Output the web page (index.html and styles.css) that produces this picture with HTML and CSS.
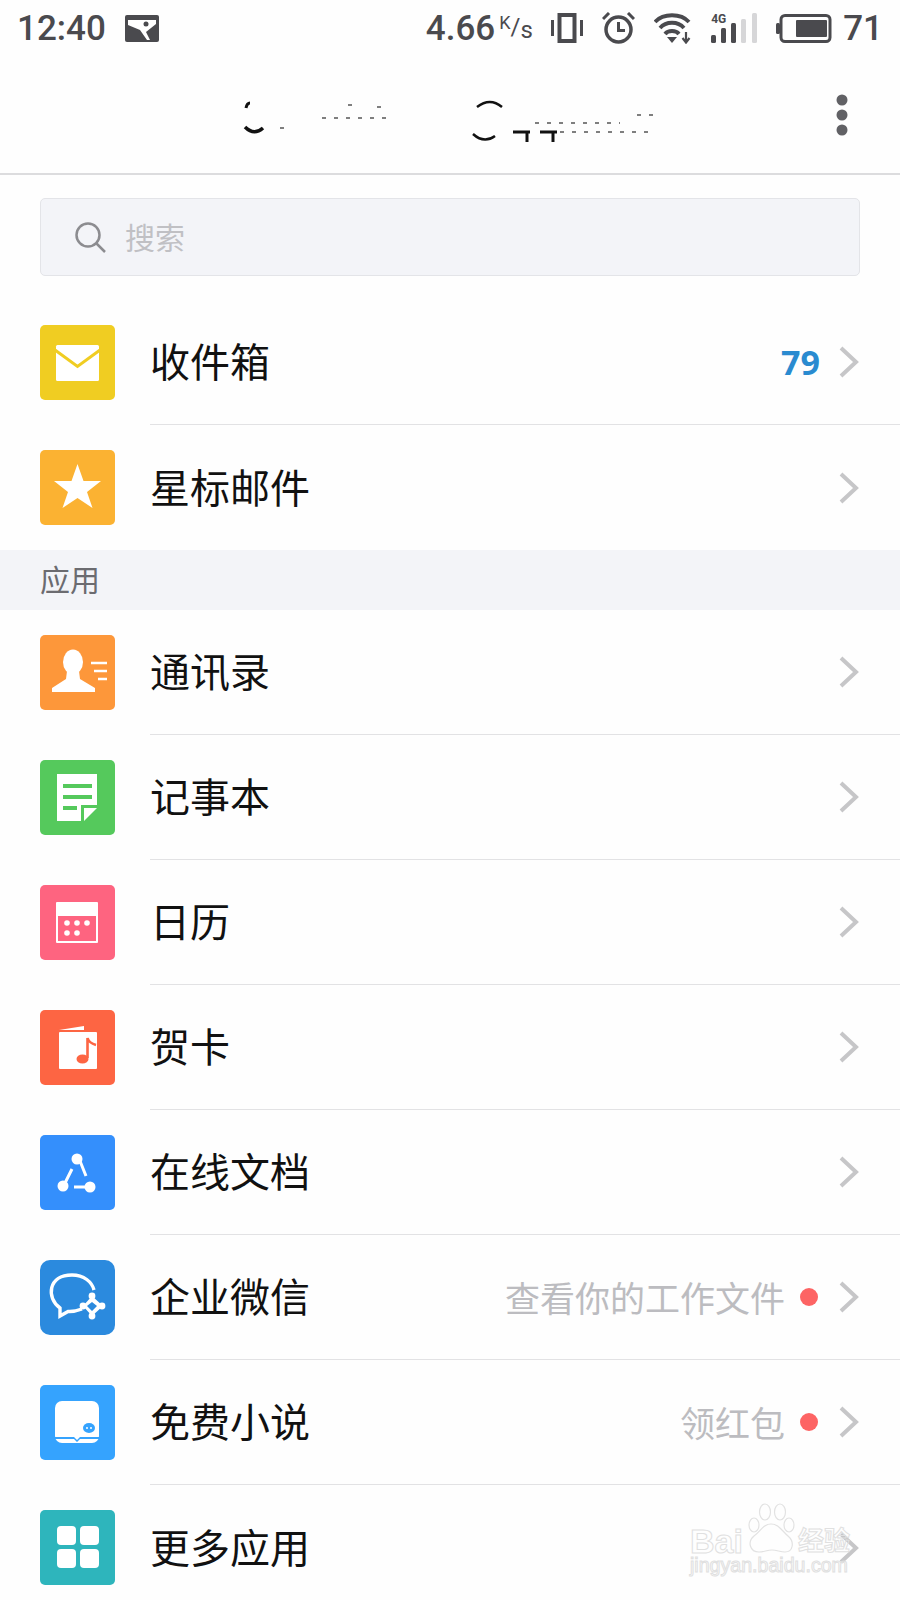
FILE: index.html
```html
<!DOCTYPE html>
<html lang="zh-CN">
  <head>
    <meta charset="UTF-8" />
    <title>邮箱</title>
    <link rel="stylesheet" href="styles.css">
  </head>
  <body>
    <div class="status-bar">
      <div class="status-left">
        <span class="clock">12:40</span>
        <svg width="34" height="27" viewBox="0 0 34 27">
          <rect width="34" height="27" rx="2" fill="#4a4a4e"/>
          <path d="M3 5 H31 V9 L21 17 L25 25 H22 L15 15 L3 10 Z" fill="#fff"/>
          <circle cx="21" cy="9" r="2.5" fill="#4a4a4e"/>
        </svg>
      </div>
      <div class="status-right">
        <span class="speed">4.66<span class="speed-unit"><span class="unit-k">K</span>/<span class="unit-s">s</span></span></span>
        <svg width="32" height="30" viewBox="0 0 32 30">
          <rect x="0" y="7" width="3" height="16" fill="#4a4a4e"/>
          <rect x="29" y="7" width="3" height="16" fill="#4a4a4e"/>
          <rect x="8.5" y="2" width="15" height="26" fill="none" stroke="#4a4a4e" stroke-width="4"/>
        </svg>
        <svg width="33" height="32" viewBox="0 0 33 32">
          <circle cx="16.5" cy="17.5" r="12.5" fill="none" stroke="#4a4a4e" stroke-width="3.5"/>
          <path d="M16.5 10 V18.5 H23" fill="none" stroke="#4a4a4e" stroke-width="3"/>
          <path d="M1 7 L7 1 M32 7 L26 1" stroke="#4a4a4e" stroke-width="3"/>
        </svg>
        <svg width="38" height="31" viewBox="0 0 38 31">
          <g fill="none" stroke="#4a4a4e" stroke-width="3.8">
            <path d="M1 9 C9 0 27 0 35 9"/>
            <path d="M6 15 C12 8 24 8 30 15"/>
            <path d="M11 21 C14 17 22 17 25 21"/>
          </g>
          <path d="M13 24 H23 L18 30 Z" fill="#4a4a4e"/>
          <path d="M32 19 V28 M28.5 25 L32 29.5 L35.5 25" fill="none" stroke="#4a4a4e" stroke-width="2.2"/>
        </svg>
        <div class="signal">
          <span class="signal-type">4G</span>
          <svg width="46" height="30" viewBox="0 0 46 30">
            <rect x="0" y="22" width="5" height="8" rx="1.5" fill="#4a4a4e"/>
            <rect x="10" y="15" width="5" height="15" rx="1.5" fill="#4a4a4e"/>
            <rect x="20" y="10" width="5" height="20" rx="1.5" fill="#4a4a4e"/>
            <rect x="30" y="6" width="5" height="24" rx="1.5" fill="#d6d6d8"/>
            <rect x="41" y="0" width="5" height="30" rx="1.5" fill="#d6d6d8"/>
          </svg>
        </div>
        <svg width="56" height="29" viewBox="0 0 56 29">
          <rect x="0" y="9" width="4" height="11" rx="1.5" fill="#4a4a4e"/>
          <rect x="5" y="1.5" width="49" height="26" rx="4" fill="none" stroke="#4a4a4e" stroke-width="3"/>
          <rect x="20" y="6" width="31" height="17" rx="1" fill="#4a4a4e"/>
        </svg>
        <span class="battery-level">71</span>
      </div>
    </div>

    <header class="title-bar">
      <!-- account address is smudged out in the shot, only scraps are left -->
      <svg class="title-scraps" width="420" height="50" viewBox="0 0 420 50">
        <g fill="none" stroke="#111" stroke-width="3">
          <path d="M6 13 Q7 8 10 8"/>
          <path d="M5 32 Q14 41 23 33" stroke-width="3.5"/>
          <path d="M237 12 Q250 2 262 12" stroke-width="2.5"/>
          <path d="M233 39 Q244 49 255 41" stroke-width="2.5"/>
          <path d="M273 37 H290 M287 37 V47 M300 37 H317 M313 37 V47" stroke-width="3"/>
        </g>
        <g stroke="#555" stroke-width="1.5" stroke-dasharray="4 8" fill="none">
          <path d="M82 23 H150"/>
          <path d="M295 28 H380"/>
          <path d="M320 37 H415"/>
          <path d="M397 20 H415"/>
          <path d="M40 33 H48"/>
          <path d="M108 10 H116"/>
          <path d="M137 12 H148"/>
        </g>
      </svg>
      <svg class="more-btn" width="12" height="42" viewBox="0 0 12 42">
        <circle cx="6" cy="6" r="5.5" fill="#616165"/>
        <circle cx="6" cy="21" r="5.5" fill="#616165"/>
        <circle cx="6" cy="36" r="5.5" fill="#616165"/>
      </svg>
    </header>

    <div class="search-wrap">
      <div class="search-box">
        <svg width="32" height="32" viewBox="0 0 32 32">
          <circle cx="14" cy="14" r="11.5" fill="none" stroke="#8c8c90" stroke-width="2.5"/>
          <path d="M22 22 L31 31" stroke="#8c8c90" stroke-width="2.5"/>
        </svg>
        <span class="search-text">搜索</span>
      </div>
    </div>

    <ul class="menu">
      <li class="row">
        <svg class="row-icon" viewBox="0 0 75 75">
          <rect width="75" height="75" rx="5" fill="#f0cd22"/>
          <rect x="16" y="20" width="43" height="36" rx="1.5" fill="#fff"/>
          <path d="M15 25 L37.5 41.5 L60 25" fill="none" stroke="#f0cd22" stroke-width="3"/>
        </svg>
        <div class="row-body">
          <span class="row-label">收件箱</span>
          <span class="count">79</span>
          <svg class="chevron" viewBox="0 0 20 32"><path d="M2 2 L17 16 L2 30"/></svg>
        </div>
      </li>
      <li class="row row-last">
        <svg class="row-icon" viewBox="0 0 75 75">
          <rect width="75" height="75" rx="5" fill="#fbb232"/>
          <path d="M37.5 14 L43.5 31 L61 31 L47 42 L52.5 58 L37.5 48 L22.5 58 L28 42 L14 31 L31.5 31 Z" fill="#fff"/>
        </svg>
        <div class="row-body">
          <span class="row-label">星标邮件</span>
          <svg class="chevron" viewBox="0 0 20 32"><path d="M2 2 L17 16 L2 30"/></svg>
        </div>
      </li>
    </ul>

    <div class="section-title"><span>应用</span></div>

    <ul class="menu">
      <li class="row">
        <svg class="row-icon" viewBox="0 0 75 75">
          <rect width="75" height="75" rx="5" fill="#fd973a"/>
          <ellipse cx="33" cy="27" rx="10" ry="12.5" fill="#fff"/>
          <path d="M27 36 H39 L40 44 L55 53 L55 57 H12 L12 53 L26 44 Z" fill="#fff"/>
          <path d="M51 28 H67 M54 36 H67 M58 44 H67" stroke="#fff" stroke-width="2.6"/>
        </svg>
        <div class="row-body">
          <span class="row-label">通讯录</span>
          <svg class="chevron" viewBox="0 0 20 32"><path d="M2 2 L17 16 L2 30"/></svg>
        </div>
      </li>
      <li class="row">
        <svg class="row-icon" viewBox="0 0 75 75">
          <rect width="75" height="75" rx="5" fill="#55c95c"/>
          <path d="M17 14 H57 V45 H41 V61 H17 Z" fill="#fff"/>
          <path d="M44 48 H57 L44 61 Z" fill="#fff"/>
          <path d="M23 26 H52 M23 37 H52 M23 48 H37" stroke="#55c95c" stroke-width="4"/>
        </svg>
        <div class="row-body">
          <span class="row-label">记事本</span>
          <svg class="chevron" viewBox="0 0 20 32"><path d="M2 2 L17 16 L2 30"/></svg>
        </div>
      </li>
      <li class="row">
        <svg class="row-icon" viewBox="0 0 75 75">
          <rect width="75" height="75" rx="5" fill="#fe6480"/>
          <rect x="16" y="17" width="42" height="41" rx="1" fill="#fff"/>
          <rect x="18" y="31" width="38" height="25" fill="#fe6480"/>
          <g fill="#fff">
            <circle cx="27" cy="38" r="2.8"/>
            <circle cx="37" cy="38" r="2.8"/>
            <circle cx="47" cy="38" r="2.8"/>
            <circle cx="27" cy="48" r="2.8"/>
            <circle cx="37" cy="48" r="2.8"/>
          </g>
        </svg>
        <div class="row-body">
          <span class="row-label">日历</span>
          <svg class="chevron" viewBox="0 0 20 32"><path d="M2 2 L17 16 L2 30"/></svg>
        </div>
      </li>
      <li class="row">
        <svg class="row-icon" viewBox="0 0 75 75">
          <rect width="75" height="75" rx="5" fill="#fd6543"/>
          <path d="M19 20 L44 16 V20 Z" fill="#fff"/>
          <rect x="19" y="22" width="38" height="37" rx="1" fill="#fff"/>
          <ellipse cx="42.5" cy="49" rx="6" ry="4.5" fill="#fd6543"/>
          <path d="M47.5 48 V28 Q49 33 56 35" fill="none" stroke="#fd6543" stroke-width="2.6"/>
        </svg>
        <div class="row-body">
          <span class="row-label">贺卡</span>
          <svg class="chevron" viewBox="0 0 20 32"><path d="M2 2 L17 16 L2 30"/></svg>
        </div>
      </li>
      <li class="row">
        <svg class="row-icon" viewBox="0 0 75 75">
          <rect width="75" height="75" rx="5" fill="#348ffc"/>
          <g fill="#fff">
            <circle cx="37" cy="24" r="5.5"/>
            <circle cx="23" cy="51" r="5.5"/>
            <circle cx="50" cy="52" r="5.5"/>
          </g>
          <path d="M40 26 L46 41 M32 34 L25 48 M34 52 H48" stroke="#fff" stroke-width="3"/>
        </svg>
        <div class="row-body">
          <span class="row-label">在线文档</span>
          <svg class="chevron" viewBox="0 0 20 32"><path d="M2 2 L17 16 L2 30"/></svg>
        </div>
      </li>
      <li class="row">
        <svg class="row-icon" viewBox="0 0 75 75">
          <rect width="75" height="75" rx="10" fill="#2b8ade"/>
          <path d="M42 49 Q34 52 28 51.5 L20 56 L20 48 C6 38 8 15 32 15 C44 15 52 22 54 30" fill="none" stroke="#fff" stroke-width="3.4"/>
          <path d="M52 36 L63 46 L52 56 L43 46 Z M52 42 L47 46 L52 51 L57 46 Z" fill="#fff" fill-rule="evenodd"/>
          <g fill="#fff">
            <circle cx="52" cy="36" r="3.4"/>
            <circle cx="62" cy="46" r="3.4"/>
            <circle cx="52" cy="56" r="3.4"/>
            <circle cx="43" cy="46" r="3.4"/>
          </g>
        </svg>
        <div class="row-body">
          <span class="row-label">企业微信</span>
          <span class="hint">查看你的工作文件</span>
          <span class="red-dot"></span>
          <svg class="chevron" viewBox="0 0 20 32"><path d="M2 2 L17 16 L2 30"/></svg>
        </div>
      </li>
      <li class="row">
        <svg class="row-icon" viewBox="0 0 75 75">
          <rect width="75" height="75" rx="5" fill="#35a3fe"/>
          <rect x="15" y="16" width="44" height="42" rx="7" fill="#fff"/>
          <path d="M15 52 H34 L37 55 L40 52 H59 V54 H40 L37 57 L34 54 H15 Z" fill="#35a3fe"/>
          <ellipse cx="49" cy="43" rx="6" ry="5" fill="#35a3fe"/>
          <circle cx="47" cy="43" r="1" fill="#fff"/>
          <circle cx="51" cy="43" r="1" fill="#fff"/>
        </svg>
        <div class="row-body">
          <span class="row-label">免费小说</span>
          <span class="hint">领红包</span>
          <span class="red-dot"></span>
          <svg class="chevron" viewBox="0 0 20 32"><path d="M2 2 L17 16 L2 30"/></svg>
        </div>
      </li>
      <li class="row row-last">
        <svg class="row-icon" viewBox="0 0 75 75">
          <rect width="75" height="75" rx="5" fill="#2eb5bc"/>
          <g fill="#fff">
            <rect x="17" y="16" width="19" height="19" rx="4"/>
            <rect x="40" y="16" width="19" height="19" rx="4"/>
            <rect x="17" y="39" width="19" height="19" rx="4"/>
            <rect x="40" y="39" width="19" height="19" rx="4"/>
          </g>
        </svg>
        <div class="row-body">
          <span class="row-label">更多应用</span>
          <svg class="chevron" viewBox="0 0 20 32"><path d="M2 2 L17 16 L2 30"/></svg>
        </div>
      </li>
    </ul>

    <!-- watermark sits on top of the last row -->
    <div class="watermark">
      <div class="wm-top">
        <span class="wm-bai">Bai</span>
        <svg class="wm-paw" width="48" height="50" viewBox="0 0 48 50">
          <g fill="none" stroke="#e2e2e2" stroke-width="1.2">
            <ellipse cx="7" cy="22" rx="5" ry="7"/>
            <ellipse cx="18" cy="9" rx="5.5" ry="8"/>
            <ellipse cx="33" cy="9" rx="5.5" ry="8"/>
            <ellipse cx="42" cy="22" rx="5" ry="7"/>
            <path d="M24 21 C16 21 14 28 7 33 C0 39 3 49 12 49 C17 49 20 47 25 47 C30 47 33 49 38 49 C46 49 48 39 41 33 C35 28 32 21 24 21 Z"/>
          </g>
          <text x="14" y="42" class="wm-du">du</text>
        </svg>
        <span class="wm-name">经验</span>
      </div>
      <div class="wm-url">jingyan.baidu.com</div>
    </div>
  </body>
</html>
```

FILE: styles.css
```css
* {
  box-sizing: border-box;
}

body {
  margin: 0;
  height: 1600px;
  overflow: hidden;
  position: relative;
  background-color: #fefefe;
  color: #111;
  font-family: "Noto Sans CJK SC", "Noto Sans", sans-serif;
}

ul {
  list-style: none;
  margin: 0;
  padding: 0;
}

/* status bar */
.status-bar {
  height: 56px;
  padding: 0 17px 0 17px;
  display: flex;
  justify-content: space-between;
  align-items: center;
  color: #4a4a4e;
  font-family: Roboto, sans-serif;
  font-weight: 500;
  font-size: 35px;
}

.status-left {
  display: flex;
  align-items: center;
  gap: 19px;
}

.status-right {
  display: flex;
  align-items: center;
  gap: 19px;
}

.speed {
  display: flex;
  align-items: center;
}

.speed-unit {
  width: 33px;
  margin-left: 4px;
  font-size: 24px;
  font-weight: 400;
  white-space: nowrap;
}

.unit-k {
  font-size: 18px;
  vertical-align: 6px;
}

.unit-s {
  vertical-align: -3px;
}

.signal {
  position: relative;
  display: flex;
}

.signal-type {
  position: absolute;
  left: 0;
  top: -1px;
  font-size: 12px;
  font-weight: 700;
  line-height: 14px;
}

.battery-level {
  margin-left: -8px;
}

/* title bar */
.title-bar {
  height: 119px;
  padding: 0 52px 0 240px;
  display: flex;
  justify-content: space-between;
  align-items: flex-start;
  border-bottom: 2px solid #dcdcde;
}

.title-scraps {
  margin-top: 39px;
}

.more-btn {
  margin-top: 38px;
}

/* search */
.search-wrap {
  padding: 23px 40px 24px;
}

.search-box {
  height: 78px;
  padding-left: 33px;
  display: flex;
  align-items: center;
  gap: 19px;
  background-color: #f3f4f8;
  border: 1px solid #e3e4e8;
  border-radius: 5px;
  color: #c0c0c4;
  font-size: 30px;
}

.search-text {
  padding-bottom: 2px;
}

/* list rows */
.row {
  display: flex;
  padding-left: 40px;
}

.row-icon {
  width: 75px;
  height: 75px;
  margin-top: 25px;
  flex-shrink: 0;
}

.row-body {
  flex: 1;
  height: 125px;
  margin-left: 35px;
  padding-right: 41px;
  display: flex;
  align-items: center;
  border-bottom: 1px solid #e2e2e4;
}

.row-last .row-body {
  border-bottom: none;
}

.row-label {
  font-size: 40px;
  padding-bottom: 4px;
  margin-right: auto;
}

.count {
  margin-right: 19px;
  color: #2a8bd0;
  font-family: "Open Sans", sans-serif;
  font-weight: 700;
  font-size: 34px;
}

.hint {
  margin-right: 15px;
  padding-bottom: 2px;
  color: #bcbcc0;
  font-size: 35px;
}

.red-dot {
  width: 18px;
  height: 18px;
  margin-right: 21px;
  border-radius: 50%;
  background-color: #fd6464;
}

.chevron {
  width: 20px;
  height: 32px;
  fill: none;
  stroke: #c6c6c8;
  stroke-width: 4;
}

.section-title {
  height: 60px;
  padding: 0 0 4px 40px;
  display: flex;
  align-items: center;
  background-color: #f3f4f8;
  color: #6b6b70;
  font-size: 30px;
}

/* baidu watermark */
.watermark {
  position: absolute;
  left: 690px;
  top: 1503px;
  width: 166px;
  color: transparent;
  -webkit-text-stroke: 1px #e0e0e0;
  font-family: "Liberation Sans", "Noto Sans CJK SC", sans-serif;
}

.wm-top {
  height: 50px;
  display: flex;
  align-items: flex-end;
  line-height: 24px;
}

.wm-bai {
  font-size: 34px;
  font-weight: 700;
}

.wm-paw {
  flex-shrink: 0;
  margin: 0 3px 0 4px;
}

.wm-du {
  fill: transparent;
  font-size: 17px;
}

.wm-name {
  font-size: 26px;
  font-weight: 700;
}

.wm-url {
  font-size: 19.6px;
  line-height: 24px;
  white-space: nowrap;
}
```
